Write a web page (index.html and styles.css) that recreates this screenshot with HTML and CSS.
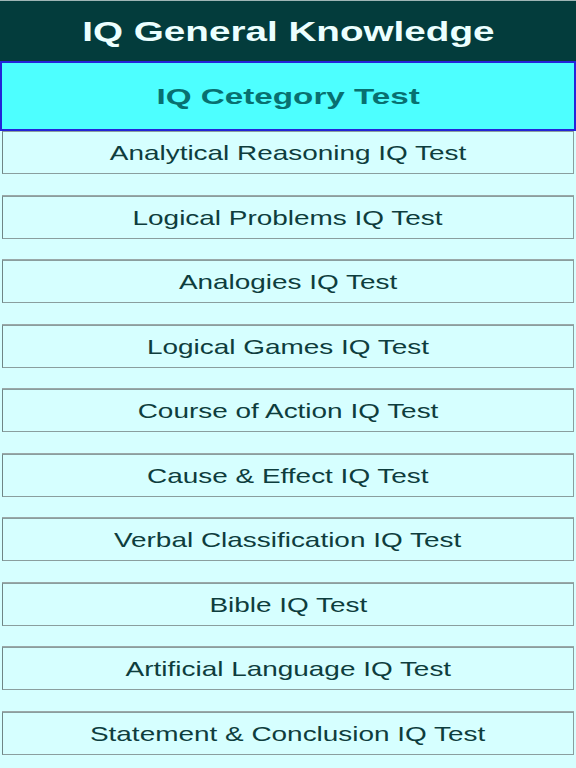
FILE: index.html
```html
<!DOCTYPE html>
<html lang="en">
<head>
    <meta charset="UTF-8">
    <title>IQ General Knowledge</title>
    <link rel="stylesheet" href="styles.css">
</head>
<body>
    <div class="header"><span class="wide">IQ General Knowledge</span></div>
    <div class="category"><span class="wide">IQ Cetegory Test</span></div>
    <ul class="testList">
        <li><div class="testBtn"><span class="wide">Analytical Reasoning IQ Test</span></div></li>
        <li><div class="testBtn"><span class="wide">Logical Problems IQ Test</span></div></li>
        <li><div class="testBtn"><span class="wide">Analogies IQ Test</span></div></li>
        <li><div class="testBtn"><span class="wide">Logical Games IQ Test</span></div></li>
        <li><div class="testBtn"><span class="wide">Course of Action IQ Test</span></div></li>
        <li><div class="testBtn"><span class="wide">Cause &amp; Effect IQ Test</span></div></li>
        <li><div class="testBtn"><span class="wide">Verbal Classification IQ Test</span></div></li>
        <li><div class="testBtn"><span class="wide">Bible IQ Test</span></div></li>
        <li><div class="testBtn"><span class="wide">Artificial Language IQ Test</span></div></li>
        <li><div class="testBtn"><span class="wide">Statement &amp; Conclusion IQ Test</span></div></li>
    </ul>
</body>
</html>
```

FILE: styles.css
```css
body{
    margin:0;
    background:#d6ffff;
    font-family:"Liberation Sans", Arial, sans-serif;
    width:576px;
    height:768px;
    overflow:hidden;
}
.wide{
    display:inline-block;
    transform:scaleX(1.33);
}
.header{
    height:61px;
    box-sizing:border-box;
    border-top:1px solid #9fb5b5;
    background:#033c3c;
    color:#ecffff;
    text-align:center;
    font-weight:bold;
    font-size:28px;
    line-height:62px;
}
.header .wide{
    transform:scaleX(1.38);
}
.category{
    height:70px;
    box-sizing:border-box;
    border:2px solid #2424d8;
    background:#4dffff;
    color:#087070;
    text-align:center;
    font-weight:bold;
    font-size:22px;
    line-height:67px;
}
.category .wide{
    transform:scaleX(1.51);
}
.testList{
    list-style:none;
    margin:0;
    padding:0 2px 0 2px;
}
.testList > li{
    height:64.56px;
    box-sizing:border-box;
    border-bottom:1px solid #9aa8a8;
}
.testBtn{
    height:43px;
    box-sizing:border-box;
    border:1px solid #8a9e9e;
    border-left-color:#6f8585;
    text-align:center;
    line-height:42px;
    font-size:21px;
    color:#0e3d3d;
}
```
